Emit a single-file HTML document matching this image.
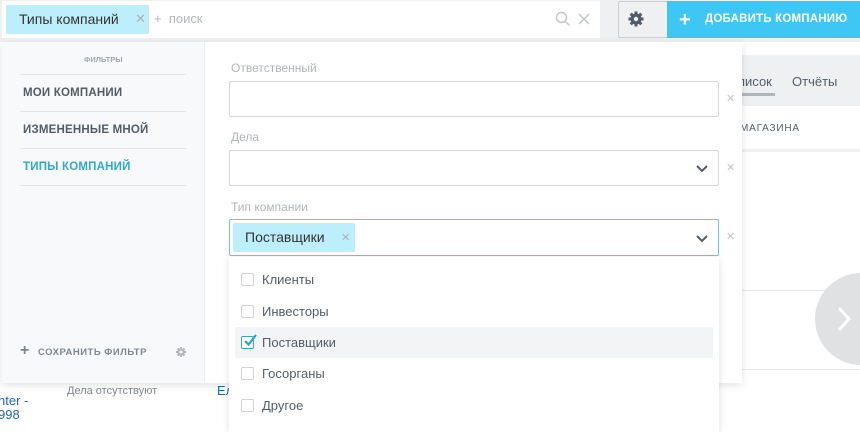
<!DOCTYPE html>
<html><head><meta charset="utf-8"><style>
*{box-sizing:border-box;margin:0;padding:0}
body{width:860px;height:427px;overflow:hidden;background:#fff;font-family:"Liberation Sans",sans-serif;position:relative}
.abs{position:absolute}
</style></head><body>
<!-- top bar -->
<div class="abs" style="left:0;top:0;width:860px;height:42px;background:#eef0f2"></div>
<div class="abs" style="left:2px;top:1px;width:598px;height:37px;background:#fff"></div>
<div class="abs" style="left:6px;top:5px;width:143px;height:29px;background:#bdeefb;border-radius:2px"></div>
<div class="abs" style="left:19px;top:11px;font-size:14px;color:#333">Типы компаний</div>
<div class="abs" style="left:135px;top:11px;font-size:13px;color:#a9b4ba">✕</div>
<div class="abs" style="left:154px;top:11px;font-size:13px;color:#b3b8bb">+&nbsp; поиск</div>
<svg class="abs" style="left:555px;top:11px" width="16" height="16"><circle cx="6.5" cy="6.5" r="5" fill="none" stroke="#c4c7c9" stroke-width="1.5"/><path d="M10 10l4.5 4.5" stroke="#c4c7c9" stroke-width="1.5"/></svg>
<svg class="abs" style="left:578px;top:13px" width="12" height="12"><path d="M1 1l10 10M11 1L1 11" stroke="#c4c7c9" stroke-width="1.5"/></svg>
<div class="abs" style="left:618px;top:1px;width:52px;height:37px;border:1px solid #c9ced2;background:#eef0f2;border-radius:2px"></div>
<svg class="abs" style="left:627px;top:10px" width="18" height="18" viewBox="0 0 18 18"><g fill="#535c69"><circle cx="9" cy="9" r="5.5"/><rect x="7.5" y="1.5" width="3" height="15"/><rect x="1.5" y="7.5" width="15" height="3"/><rect x="7.5" y="1.5" width="3" height="15" transform="rotate(45 9 9)"/><rect x="7.5" y="1.5" width="3" height="15" transform="rotate(-45 9 9)"/></g><circle cx="9" cy="9" r="2.2" fill="#eef0f2"/></svg>
<div class="abs" style="left:667px;top:1px;width:193px;height:37px;background:#3ec6f4"></div>
<div class="abs" style="left:679px;top:9px;font-size:20px;color:#fff;font-weight:bold">+</div>
<div class="abs" style="left:705px;top:13px;font-size:11.5px;color:#fff;font-weight:bold;letter-spacing:.2px">ДОБАВИТЬ КОМПАНИЮ</div>
<!-- background page right -->
<div class="abs" style="left:742px;top:55px;width:118px;height:51px;background:#eef0f2"></div>
<div class="abs" style="left:738px;top:74px;font-size:13px;color:#535c69">писок</div>
<div class="abs" style="left:738px;top:93px;width:37px;height:3px;background:#b0b5b9"></div>
<div class="abs" style="left:792px;top:74px;font-size:13px;color:#535c69">Отчёты</div>
<div class="abs" style="left:740px;top:123px;font-size:10px;color:#535c69;letter-spacing:.8px">МАГАЗИНА</div>
<div class="abs" style="left:742px;top:149px;width:118px;height:3px;background:#eef0f2"></div>
<div class="abs" style="left:742px;top:290px;width:118px;height:1px;background:#e5e7e9"></div>
<div class="abs" style="left:742px;top:369px;width:118px;height:1px;background:#e5e7e9"></div>
<div class="abs" style="left:815px;top:273px;width:92px;height:92px;border-radius:50%;background:#dfe1e3"></div>
<svg class="abs" style="left:836px;top:306px" width="16" height="26"><path d="M3 2l10 11L3 24" fill="none" stroke="#fff" stroke-width="3"/></svg>
<!-- background below -->
<div class="abs" style="left:67px;top:385px;font-size:11px;color:#80868e">Дела отсутствуют</div>
<div class="abs" style="left:217px;top:383px;font-size:13px;color:#2067b0">Ел</div>
<div class="abs" style="left:-2px;top:394px;font-size:13px;color:#2067b0;line-height:14px">nter -<br>998</div>
<!-- popup -->
<div class="abs" style="left:2px;top:42px;width:740px;height:341px;background:#fff;box-shadow:0 2px 8px rgba(0,0,0,.12)"></div>
<div class="abs" style="left:2px;top:42px;width:203px;height:341px;background:#f8f9fa;border-right:1px solid #edeef0"></div>
<div class="abs" style="left:84px;top:55px;font-size:7.5px;color:#a0a5aa;font-weight:bold">ФИЛЬТРЫ</div>
<div class="abs" style="left:20px;top:74px;width:166px;height:1px;background:#e3e6e9"></div>
<div class="abs" style="left:23px;top:87px;font-size:11.5px;color:#535c69;font-weight:bold;letter-spacing:.2px">МОИ КОМПАНИИ</div>
<div class="abs" style="left:20px;top:111px;width:166px;height:1px;background:#e3e6e9"></div>
<div class="abs" style="left:23px;top:124px;font-size:11.5px;color:#535c69;font-weight:bold;letter-spacing:.2px">ИЗМЕНЕННЫЕ МНОЙ</div>
<div class="abs" style="left:20px;top:148px;width:166px;height:1px;background:#e3e6e9"></div>
<div class="abs" style="left:23px;top:161px;font-size:11.5px;color:#2fa8d0;font-weight:bold;letter-spacing:.2px">ТИПЫ КОМПАНИЙ</div>
<div class="abs" style="left:20px;top:185px;width:166px;height:1px;background:#e3e6e9"></div>
<div class="abs" style="left:20px;top:342px;font-size:16px;color:#80868e;font-weight:bold">+</div>
<div class="abs" style="left:38px;top:347px;font-size:9.5px;color:#80868e;font-weight:bold;letter-spacing:.5px">СОХРАНИТЬ ФИЛЬТР</div>
<svg class="abs" style="left:175px;top:346px" width="12" height="12" viewBox="0 0 18 18"><g fill="#b5b9bd"><circle cx="9" cy="9" r="5.5"/><rect x="7.5" y="1.5" width="3" height="15"/><rect x="1.5" y="7.5" width="15" height="3"/><rect x="7.5" y="1.5" width="3" height="15" transform="rotate(45 9 9)"/><rect x="7.5" y="1.5" width="3" height="15" transform="rotate(-45 9 9)"/></g><circle cx="9" cy="9" r="2.2" fill="#f8f9fa"/></svg>
<!-- fields -->
<div class="abs" style="left:231px;top:61px;font-size:12px;color:#b0b4b8">Ответственный</div>
<div class="abs" style="left:229px;top:81px;width:490px;height:36px;border:1px solid #d5d7d9;border-radius:2px"></div>
<div class="abs" style="left:726px;top:92px;font-size:11px;color:#c2c6c9">✕</div>
<div class="abs" style="left:231px;top:130px;font-size:12px;color:#b0b4b8">Дела</div>
<div class="abs" style="left:229px;top:150px;width:490px;height:36px;border:1px solid #d5d7d9;border-radius:2px"></div>
<svg class="abs" style="left:696px;top:165px" width="12" height="8"><path d="M1 1l5 5 5-5" fill="none" stroke="#535c69" stroke-width="2"/></svg>
<div class="abs" style="left:726px;top:161px;font-size:11px;color:#c2c6c9">✕</div>
<div class="abs" style="left:231px;top:200px;font-size:12px;color:#b0b4b8">Тип компании</div>
<div class="abs" style="left:229px;top:219px;width:490px;height:37px;border:1px solid #6ec6dc;border-radius:2px"></div>
<div class="abs" style="left:233px;top:223px;width:122px;height:29px;background:#bdeefb;border-radius:2px"></div>
<div class="abs" style="left:245px;top:229px;font-size:14px;color:#333">Поставщики</div>
<div class="abs" style="left:341px;top:231px;font-size:11px;color:#a9b4ba">✕</div>
<svg class="abs" style="left:696px;top:235px" width="12" height="8"><path d="M1 1l5 5 5-5" fill="none" stroke="#535c69" stroke-width="2"/></svg>
<div class="abs" style="left:726px;top:230px;font-size:11px;color:#c2c6c9">✕</div>
<!-- dropdown -->
<div class="abs" style="left:229px;top:257px;width:490px;height:175px;background:#fff;box-shadow:0 2px 8px rgba(0,0,0,.12)"></div>
<div class="abs" style="left:235px;top:327px;width:478px;height:31px;background:#f3f4f6"></div>
<div class="abs" style="left:241px;top:273px;width:13px;height:13px;border:1px solid #d0d3d6;border-radius:2px;background:#fff"></div>
<div class="abs" style="left:262px;top:272px;font-size:13px;color:#535c69">Клиенты</div>
<div class="abs" style="left:241px;top:305px;width:13px;height:13px;border:1px solid #d0d3d6;border-radius:2px;background:#fff"></div>
<div class="abs" style="left:262px;top:304px;font-size:13px;color:#535c69">Инвесторы</div>
<div class="abs" style="left:241px;top:336px;width:13px;height:13px;border:1.5px solid #3aa6c8;border-radius:2px;background:#fff"></div>
<svg class="abs" style="left:242px;top:332px" width="16" height="16"><path d="M3 9l3.5 3.5L14 3" fill="none" stroke="#2f9fc4" stroke-width="2.2"/></svg>
<div class="abs" style="left:262px;top:335px;font-size:13px;color:#535c69">Поставщики</div>
<div class="abs" style="left:241px;top:367px;width:13px;height:13px;border:1px solid #d0d3d6;border-radius:2px;background:#fff"></div>
<div class="abs" style="left:262px;top:366px;font-size:13px;color:#535c69">Госорганы</div>
<div class="abs" style="left:241px;top:399px;width:13px;height:13px;border:1px solid #d0d3d6;border-radius:2px;background:#fff"></div>
<div class="abs" style="left:262px;top:398px;font-size:13px;color:#535c69">Другое</div>
</body></html>
